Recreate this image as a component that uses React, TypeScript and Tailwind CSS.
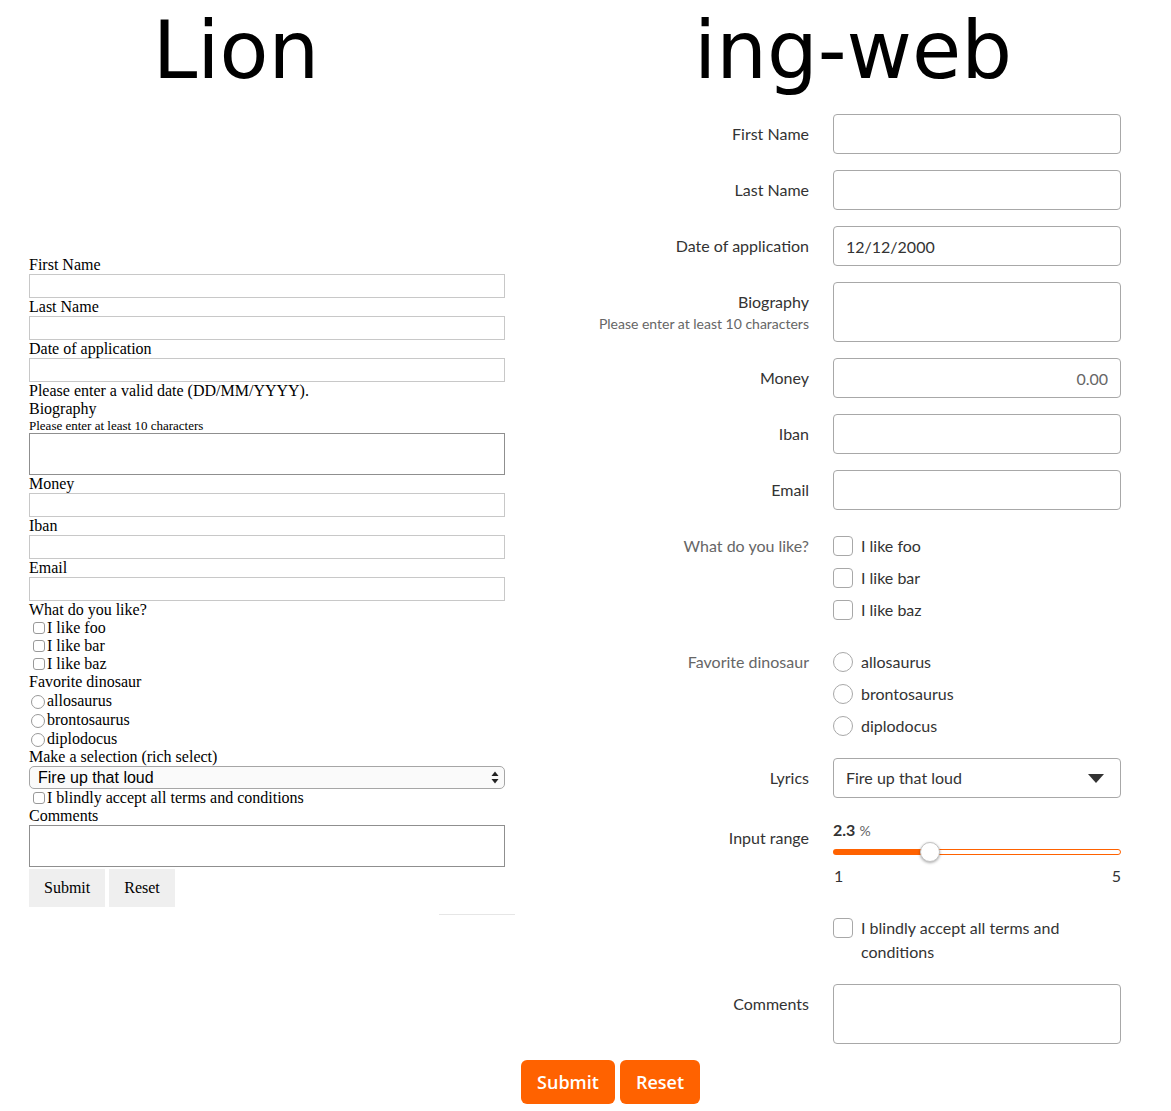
import React from 'react';

const LLabel = ({ children, className = '' }: { children: React.ReactNode; className?: string }) => (
  <div className={`h-[18px] whitespace-nowrap ${className}`}>{children}</div>
);

const LInput = ({ tall = false }: { tall?: boolean }) =>
  tall ? (
    <textarea readOnly className="block h-[42px] w-[476px] resize-none border border-[#8f8f8f] bg-white" />
  ) : (
    <input readOnly className="block h-[24px] w-[476px] border border-[#c8c8c8] bg-white" />
  );

const LCheck = ({ label }: { label: string }) => (
  <div className="flex h-[18px] items-center">
    <span className="ml-[4px] mr-[2px] h-[12px] w-[12px] rounded-[3px] border border-[#999] bg-white" />
    <span>{label}</span>
  </div>
);

const LRadio = ({ label }: { label: string }) => (
  <div className="flex h-[19px] items-center">
    <span className="ml-[2px] mr-[2px] mt-[2px] h-[14px] w-[14px] rounded-full border border-[#999] bg-white" />
    <span>{label}</span>
  </div>
);

const Row = ({
  label,
  help,
  legend = false,
  labelPad = 'pt-[8px]',
  className = '',
  children,
}: {
  label?: string;
  help?: string;
  legend?: boolean;
  labelPad?: string;
  className?: string;
  children: React.ReactNode;
}) => (
  <div className={`flex gap-[24px] ${className}`}>
    <div className={`w-[294px] shrink-0 text-right ${labelPad}`}>
      {label && (
        <div className={`text-[16px] leading-[24px] ${legend ? 'text-[#666]' : 'text-[#333]'}`}>{label}</div>
      )}
      {help && <div className="text-[14px] leading-[20px] text-[#666]">{help}</div>}
    </div>
    <div className="w-[288px] shrink-0">{children}</div>
  </div>
);

const RInput = ({ value = '', right = false, tall = false }: { value?: string; right?: boolean; tall?: boolean }) =>
  tall ? (
    <textarea
      readOnly
      className="block h-[60px] w-[288px] resize-none rounded-[4px] border border-[#a8a8a8] bg-white"
    />
  ) : (
    <input
      readOnly
      defaultValue={value}
      className={`block h-[40px] w-[288px] rounded-[4px] border border-[#a8a8a8] bg-white px-[12px] text-[16px] ${
        right ? 'text-right text-[#666]' : 'text-[#333]'
      }`}
    />
  );

const RCheck = ({ label, radio = false }: { label: string; radio?: boolean }) => (
  <div className="flex h-[32px] items-center gap-[8px]">
    <span
      className={`h-[20px] w-[20px] shrink-0 border border-[#a8a8a8] bg-white ${radio ? 'rounded-full' : 'rounded-[4px]'}`}
    />
    <span className="text-[16px] leading-[24px] text-[#333]">{label}</span>
  </div>
);

export default function App() {
  return (
    <div className="flex min-h-[1111px] w-[1171px] bg-white">
      {/* Lion column */}
      <div className="w-[515px] shrink-0">
        <h1 className="pr-[43px] pt-[4px] text-center font-['DejaVu_Sans',sans-serif] text-[80px] font-normal leading-[93px] text-black">
          Lion
        </h1>
        <form className="mt-[159px] pl-[29px] font-['Liberation_Serif',serif] text-[16px] leading-[18px] text-black">
          <LLabel>First Name</LLabel>
          <LInput />
          <LLabel>Last Name</LLabel>
          <LInput />
          <LLabel>Date of application</LLabel>
          <LInput />
          <LLabel>Please enter a valid date (DD/MM/YYYY).</LLabel>
          <LLabel>Biography</LLabel>
          <div className="h-[15px] text-[13px] leading-[15px]">Please enter at least 10 characters</div>
          <LInput tall />
          <LLabel>Money</LLabel>
          <LInput />
          <LLabel>Iban</LLabel>
          <LInput />
          <LLabel>Email</LLabel>
          <LInput />
          <LLabel>What do you like?</LLabel>
          <LCheck label="I like foo" />
          <LCheck label="I like bar" />
          <LCheck label="I like baz" />
          <LLabel>Favorite dinosaur</LLabel>
          <LRadio label="allosaurus" />
          <LRadio label="brontosaurus" />
          <LRadio label="diplodocus" />
          <LLabel>Make a selection (rich select)</LLabel>
          <div className="flex h-[23px] w-[476px] items-center justify-between rounded-[5px] border border-[#a6a6a6] bg-[#fafafa] pl-[8px] pr-[5px] font-['Liberation_Sans',sans-serif] text-[16px] leading-[18px]">
            <span>Fire up that loud</span>
            <svg width="8" height="13" viewBox="0 0 8 13">
              <polygon points="4,0.5 7.5,5 0.5,5" fill="#222" />
              <polygon points="0.5,8 7.5,8 4,12.5" fill="#222" />
            </svg>
          </div>
          <LCheck label="I blindly accept all terms and conditions" />
          <LLabel>Comments</LLabel>
          <LInput tall />
          <div className="mt-[2px] flex gap-[4px]">
            <button type="button" className="h-[38px] bg-[#efefef] px-[15px] text-black">
              Submit
            </button>
            <button type="button" className="h-[38px] bg-[#efefef] px-[15px] text-black">
              Reset
            </button>
          </div>
          <div className="ml-[410px] mt-[7px] h-px w-[76px] bg-[#e6e6e6]" />
        </form>
      </div>

      {/* ing-web column */}
      <div className="flex-1 font-['Lato',sans-serif] text-[#333]">
        <h1 className="pl-[20px] pt-[4px] text-center font-['DejaVu_Sans',sans-serif] text-[80px] font-normal leading-[93px] text-black">
          ing-web
        </h1>
        <form className="mt-[17px] flex flex-col">
          <Row label="First Name">
            <RInput />
          </Row>
          <Row label="Last Name" className="mt-[16px]">
            <RInput />
          </Row>
          <Row label="Date of application" className="mt-[16px]">
            <RInput value="12/12/2000" />
          </Row>
          <Row label="Biography" help="Please enter at least 10 characters" className="mt-[16px]">
            <RInput tall />
          </Row>
          <Row label="Money" className="mt-[16px]">
            <RInput value="0.00" right />
          </Row>
          <Row label="Iban" className="mt-[16px]">
            <RInput />
          </Row>
          <Row label="Email" className="mt-[16px]">
            <RInput />
          </Row>
          <Row label="What do you like?" legend labelPad="pt-[4px]" className="mt-[20px]">
            <RCheck label="I like foo" />
            <RCheck label="I like bar" />
            <RCheck label="I like baz" />
          </Row>
          <Row label="Favorite dinosaur" legend labelPad="pt-[4px]" className="mt-[20px]">
            <RCheck label="allosaurus" radio />
            <RCheck label="brontosaurus" radio />
            <RCheck label="diplodocus" radio />
          </Row>
          <Row label="Lyrics" className="mt-[16px]">
            <div className="flex h-[40px] w-[288px] items-center justify-between rounded-[4px] border border-[#a8a8a8] bg-white pl-[12px] pr-[16px]">
              <span className="text-[16px] text-[#333]">Fire up that loud</span>
              <svg width="16" height="9" viewBox="0 0 16 9">
                <polygon points="0,0 16,0 8,9" fill="#333" />
              </svg>
            </div>
          </Row>
          <Row label="Input range" labelPad="pt-[12px]" className="mt-[16px]">
            <div className="pt-[4px]">
              <div className="h-[24px] leading-[24px]">
                <span className="text-[16px] font-bold text-[#333]">2.3</span>
                <span className="ml-[4px] text-[14px] text-[#666]">%</span>
              </div>
              <div className="relative h-[20px] w-[288px]">
                <div className="absolute left-[96px] right-0 top-[7px] h-[6px] rounded-full border border-[#ff6200] bg-white" />
                <div className="absolute left-0 top-[7px] h-[6px] w-[100px] rounded-full bg-[#ff6200]" />
                <div className="absolute left-[87px] top-0 h-[20px] w-[20px] rounded-full border border-[#c4c4c4] bg-white shadow-[0_1px_3px_rgba(0,0,0,0.35)]" />
              </div>
              <div className="mt-[2px] flex h-[24px] justify-between text-[16px] leading-[24px] text-[#333]">
                <span className="pl-[1px]">1</span>
                <span>5</span>
              </div>
            </div>
          </Row>
          <Row className="mt-[28px]" labelPad="">
            <div className="flex gap-[8px]">
              <span className="mt-[2px] h-[20px] w-[20px] shrink-0 rounded-[4px] border border-[#a8a8a8] bg-white" />
              <span className="w-[260px] text-[16px] leading-[24px] text-[#333]">
                I blindly accept all terms and conditions
              </span>
            </div>
          </Row>
          <Row label="Comments" className="mt-[20px]">
            <RInput tall />
          </Row>
          <div className="ml-[6px] mt-[16px] flex gap-[5px] font-['Open_Sans',sans-serif]">
            <button type="button" className="h-[44px] w-[94px] rounded-[6px] bg-[#ff6200] text-[18px] font-semibold text-white">
              Submit
            </button>
            <button type="button" className="h-[44px] w-[80px] rounded-[6px] bg-[#ff6200] text-[18px] font-semibold text-white">
              Reset
            </button>
          </div>
        </form>
      </div>
    </div>
  );
}
